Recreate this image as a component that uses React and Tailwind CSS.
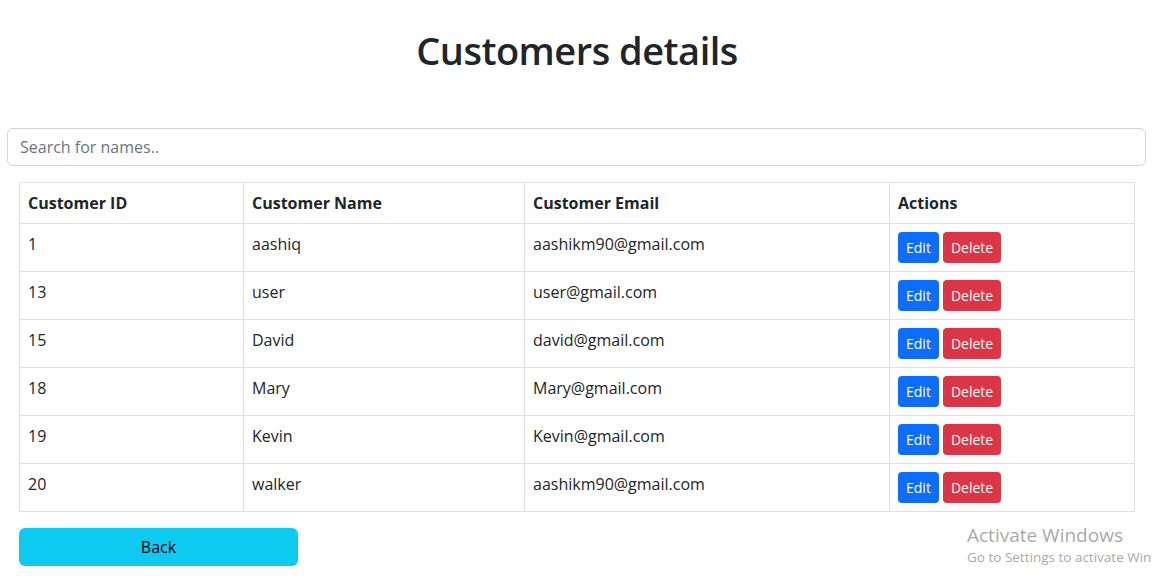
import React from "react";

const customers = [
  { id: 1, name: "aashiq", email: "aashikm90@gmail.com" },
  { id: 13, name: "user", email: "user@gmail.com" },
  { id: 15, name: "David", email: "david@gmail.com" },
  { id: 18, name: "Mary", email: "Mary@gmail.com" },
  { id: 19, name: "Kevin", email: "Kevin@gmail.com" },
  { id: 20, name: "walker", email: "aashikm90@gmail.com" },
];

const App = () => {
  return (
    <div
      className="relative h-[576px] overflow-hidden bg-white text-[#212529]"
      style={{ fontFamily: '"Open Sans", "Noto Sans", sans-serif' }}
    >
      {/* heading */}
      <h1 className="pt-[26px] pr-[11px] text-center text-[38px] font-semibold leading-[48px] tracking-[-0.5px]">
        Customers details
      </h1>

      {/* search */}
      <div className="mt-[54px] pl-[7px] pr-[19px]">
        <input
          type="text"
          placeholder="Search for names.."
          className="block h-[38px] w-full rounded-md border border-[#ced4da] px-3 text-base text-[#212529] placeholder:text-[#6c757d] outline-none"
        />
      </div>

      {/* table */}
      <div className="mt-4 pl-[19px]">
        <table className="w-[1115px] table-fixed border-collapse text-base">
          <colgroup>
            <col className="w-[224px]" />
            <col className="w-[281px]" />
            <col className="w-[365px]" />
            <col className="w-[245px]" />
          </colgroup>
          <thead>
            <tr>
              <th className="border border-[#dee2e6] p-2 text-left font-bold leading-6">Customer ID</th>
              <th className="border border-[#dee2e6] p-2 text-left font-bold leading-6">Customer Name</th>
              <th className="border border-[#dee2e6] p-2 text-left font-bold leading-6">Customer Email</th>
              <th className="border border-[#dee2e6] p-2 text-left font-bold leading-6">Actions</th>
            </tr>
          </thead>
          <tbody>
            {customers.map((c) => (
              <tr key={c.id}>
                <td className="border border-[#dee2e6] p-2 align-top leading-6">{c.id}</td>
                <td className="border border-[#dee2e6] p-2 align-top leading-6">{c.name}</td>
                <td className="border border-[#dee2e6] p-2 align-top leading-6">{c.email}</td>
                <td className="border border-[#dee2e6] p-2 align-top leading-6">
                  <div className="flex gap-1">
                    <button className="h-[31px] rounded bg-[#0d6efd] px-2 text-sm leading-[21px] text-white">
                      Edit
                    </button>
                    <button className="h-[31px] rounded bg-[#dc3545] px-2 text-sm leading-[21px] text-white">
                      Delete
                    </button>
                  </div>
                </td>
              </tr>
            ))}
          </tbody>
        </table>
      </div>

      {/* back */}
      <div className="mt-4 pl-[19px]">
        <button className="h-[38px] w-[279px] rounded-md bg-[#0dcaf0] text-base text-black">
          Back
        </button>
      </div>

      {/* windows watermark */}
      <div className="absolute left-[967px] top-[523px] whitespace-nowrap text-[#a9a9a9]">
        <div className="text-[19px] leading-6">Activate Windows</div>
        <div className="text-[13.5px] leading-5">Go to Settings to activate Win</div>
      </div>
    </div>
  );
};

export default App;
